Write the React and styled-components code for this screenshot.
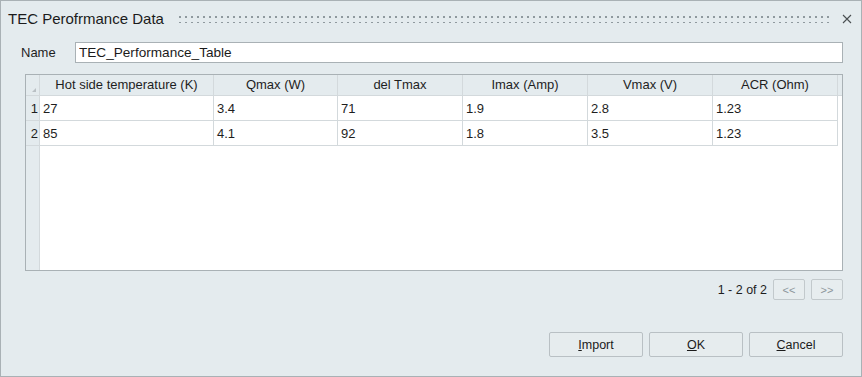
import React from 'react';
import styled, { createGlobalStyle } from 'styled-components';

const GlobalStyle = createGlobalStyle`
  html, body {
    margin: 0;
    padding: 0;
    background: #ffffff;
  }
  * {
    box-sizing: border-box;
  }
`;

const Dialog = styled.div`
  width: 862px;
  height: 377px;
  border: 1px solid #a9b1b5;
  background-color: #e4ebee;
  display: flex;
  flex-direction: column;
  font-family: 'Liberation Sans', Arial, sans-serif;
  color: #1e1e1e;
`;

const TitleBar = styled.div`
  height: 35px;
  display: flex;
  align-items: center;
  padding: 0 8px 0 7px;
`;

const Title = styled.div`
  font-size: 15px;
  white-space: nowrap;
  color: #1b1b1b;
`;

const Grip = styled.div`
  flex: 1;
  height: 8px;
  margin: 1px 12px 0 15px;
  background-image: radial-gradient(circle, #8f999e 0.9px, transparent 1.1px);
  background-size: 6px 6px;
  background-position: -2px -1px;
`;

const CloseButton = styled.button`
  border: none;
  background: none;
  padding: 0;
  width: 12px;
  height: 12px;
  display: flex;
  align-items: center;
  justify-content: center;
  color: #4a4f52;
`;

const Body = styled.div`
  flex: 1;
  display: flex;
  flex-direction: column;
  padding: 0 18px 19px 24px;
`;

const NameRow = styled.div`
  display: flex;
  align-items: center;
  margin-top: 6px;
`;

const Label = styled.label`
  font-size: 13px;
  width: 54px;
  margin-left: -4px;
`;

const TextInput = styled.input`
  flex: 1;
  height: 21px;
  border: 1px solid #a9b1b5;
  background: #ffffff;
  font-family: 'Liberation Sans', Arial, sans-serif;
  font-size: 13.6px;
  padding: 0 3px;
  color: #1b1b1b;
  outline: none;
`;

const TableBox = styled.div`
  margin-top: 11px;
  height: 197px;
  border: 1px solid #a9b1b5;
  background: #ffffff;
  display: flex;
  flex-direction: column;
  position: relative;
`;

const RowNumberStrip = styled.div`
  position: absolute;
  left: 0;
  top: 0;
  bottom: 0;
  width: 14px;
  background: #e4ebee;
  border-right: 1px solid #d3d9dc;
`;

const TableRow = styled.div`
  display: flex;
  align-self: flex-start;
  width: ${(p) => (p.header ? '100%' : 'auto')};
  height: ${(p) => (p.header ? '21px' : '25px')};
  border-bottom: 1px solid #d3d9dc;
  background: ${(p) => (p.header ? '#e4ebee' : 'transparent')};
  position: relative;
  z-index: 1;
`;

const Cell = styled.div`
  width: ${(p) => p.width}px;
  flex: none;
  border-right: ${(p) => (p.last ? 'none' : '1px solid #d3d9dc')};
  font-size: 13px;
  display: flex;
  align-items: center;
  justify-content: ${(p) => (p.header ? 'center' : 'flex-start')};
  padding: ${(p) => (p.header ? '0 0 1px' : '1px 3px 0')};
  white-space: nowrap;
  overflow: hidden;
`;

const NumberCell = styled.div`
  width: 14px;
  flex: none;
  border-right: 1px solid #d3d9dc;
  background: #e4ebee;
  font-size: 13px;
  display: flex;
  align-items: center;
  justify-content: flex-end;
  padding: 1px 1px 0 0;
  position: relative;
`;

const Corner = styled.div`
  position: absolute;
  right: 3px;
  bottom: 3px;
  width: 0;
  height: 0;
  border-left: 4px solid transparent;
  border-bottom: 4px solid #b9c0c4;
`;

const Pager = styled.div`
  margin-top: 8px;
  display: flex;
  justify-content: flex-end;
  align-items: center;
  gap: 6px;
  font-size: 12.5px;
`;

const PagerButton = styled.button`
  width: 32px;
  height: 21px;
  border: 1px solid #c2c9cc;
  border-radius: 2px;
  background: #e7edef;
  color: #8d969b;
  font-family: 'Liberation Sans', Arial, sans-serif;
  font-size: 11px;
  padding: 0;
`;

const Footer = styled.div`
  margin-top: auto;
  display: flex;
  justify-content: flex-end;
  gap: 6px;
`;

const Button = styled.button`
  width: 94px;
  height: 25px;
  border: 1px solid #b9c0c4;
  border-radius: 2px;
  background: #e6ecee;
  font-family: 'Liberation Sans', Arial, sans-serif;
  font-size: 12.5px;
  color: #1b1b1b;
  padding: 0;
`;

const columns = [
  { title: 'Hot side temperature (K)', width: 174 },
  { title: 'Qmax (W)', width: 124 },
  { title: 'del Tmax', width: 125 },
  { title: 'Imax (Amp)', width: 125 },
  { title: 'Vmax (V)', width: 125 },
  { title: 'ACR (Ohm)', width: 125 },
];

const rows = [
  ['27', '3.4', '71', '1.9', '2.8', '1.23'],
  ['85', '4.1', '92', '1.8', '3.5', '1.23'],
];

function CloseIcon() {
  return (
    <svg width="10" height="10" viewBox="0 0 10 10">
      <path d="M1 1 L9 9 M9 1 L1 9" stroke="currentColor" strokeWidth="1.1" fill="none" />
    </svg>
  );
}

export default function App() {
  return (
    <>
      <GlobalStyle />
      <Dialog>
        <TitleBar>
          <Title>TEC Perofrmance Data</Title>
          <Grip />
          <CloseButton>
            <CloseIcon />
          </CloseButton>
        </TitleBar>
        <Body>
          <NameRow>
            <Label>Name</Label>
            <TextInput defaultValue="TEC_Performance_Table" />
          </NameRow>
          <TableBox>
            <RowNumberStrip />
            <TableRow header>
              <NumberCell>
                <Corner />
              </NumberCell>
              {columns.map((c) => (
                <Cell key={c.title} header width={c.width}>
                  {c.title}
                </Cell>
              ))}
              <Cell width={5} last />
            </TableRow>
            {rows.map((r, i) => (
              <TableRow key={i}>
                <NumberCell>{i + 1}</NumberCell>
                {r.map((v, j) => (
                  <Cell key={j} width={columns[j].width}>
                    {v}
                  </Cell>
                ))}
              </TableRow>
            ))}
          </TableBox>
          <Pager>
            <span>1 - 2 of 2</span>
            <PagerButton>&lt;&lt;</PagerButton>
            <PagerButton>&gt;&gt;</PagerButton>
          </Pager>
          <Footer>
            <Button>
              <u>I</u>mport
            </Button>
            <Button>
              <u>O</u>K
            </Button>
            <Button>
              <u>C</u>ancel
            </Button>
          </Footer>
        </Body>
      </Dialog>
    </>
  );
}
